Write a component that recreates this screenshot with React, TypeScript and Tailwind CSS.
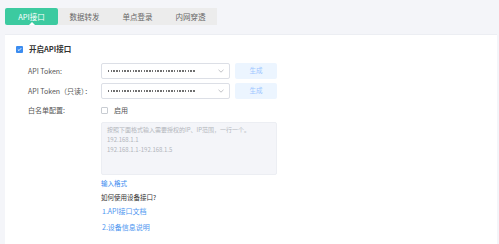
const font = { fontFamily: '"Noto Sans CJK SC", "Noto Sans", sans-serif' };

function Select() {
  return (
    <div className="flex items-center justify-between w-[129px] h-[16px] border border-[#dcdfe6] rounded-[2px] bg-white pl-[6px] pr-[5px]">
      <div className="w-[88px] h-[1.5px] bg-[repeating-linear-gradient(90deg,#707070_0px,#707070_1.5px,transparent_1.5px,transparent_2.75px)]" />
      <svg width="6" height="4" viewBox="0 0 6 4" fill="none">
        <path d="M0.5 0.8 L3 3.2 L5.5 0.8" stroke="#b0b3b8" strokeWidth="0.8" />
      </svg>
    </div>
  );
}

function GenButton() {
  return (
    <div className="ml-[5px] w-[42px] h-[16px] bg-[#ecf5ff] rounded-[2px] flex items-center justify-center text-[6.5px] text-[#9dc6ff]">生成</div>
  );
}

export default function App() {
  const tabs = ["API接口", "数据转发", "单点登录", "内网穿透"];
  return (
    <div style={font} className="w-[499px] h-[244px] bg-[#f4f5f9] flex flex-col overflow-hidden">
      <div className="flex pt-[8px] pl-[5px]">
        {tabs.map((t, i) => (
          <div
            key={t}
            className={`relative w-[53px] h-[17px] flex items-center justify-center text-[7.5px] ${
              i === 0 ? "bg-[#3ccaa0] text-white rounded-[2px]" : "bg-[#ececec] text-[#666]"
            }`}
          >
            {t}
            {i === 0 && (
              <span className="absolute bottom-0 left-1/2 -translate-x-1/2 w-0 h-0 border-l-[3px] border-r-[3px] border-b-[3px] border-l-transparent border-r-transparent border-b-white" />
            )}
          </div>
        ))}
      </div>
      <div className="mt-[9px] ml-[5px] mr-[2px] flex-1 bg-white border-t border-[#eceef3] pl-[11px] pt-[9px]">
        <div className="flex items-center gap-[6px] h-[10px]">
          <div className="w-[7px] h-[7px] bg-[#3b8cf0] rounded-[1px] flex items-center justify-center">
            <svg width="5" height="5" viewBox="0 0 5 5" fill="none">
              <path d="M0.8 2.5 L2 3.6 L4.2 1.2" stroke="white" strokeWidth="0.9" />
            </svg>
          </div>
          <span className="text-[7.5px] font-bold text-[#333]">开启API接口</span>
        </div>
        <div className="pl-[12px] pt-[9px] flex flex-col">
          <div className="flex items-center h-[16px]">
            <span className="w-[73px] text-[7px] text-[#555]">API Token:</span>
            <Select />
            <GenButton />
          </div>
          <div className="flex items-center h-[16px] mt-[4px]">
            <span className="w-[73px] text-[7px] text-[#555] whitespace-nowrap">API Token（只读）：</span>
            <Select />
            <GenButton />
          </div>
          <div className="flex items-center h-[12px] mt-[5px]">
            <span className="w-[73px] text-[7px] text-[#555]">白名单配置:</span>
            <div className="w-[7px] h-[7px] border border-[#c8ccd2] rounded-[1px] bg-white" />
            <span className="ml-[6px] text-[7px] text-[#555]">启用</span>
          </div>
          <div className="ml-[73px] mt-[6px] w-[176px] h-[53px] bg-[#f4f5f9] border border-[#eceef3] rounded-[2px] px-[5px] pt-[2px] text-[6px] leading-[10px] text-[#b3b6bc]">
            <div>按照下面格式输入需要授权的IP、IP范围，一行一个。</div>
            <div>192.168.1.1</div>
            <div>192.168.1.1-192.168.1.5</div>
          </div>
          <div className="ml-[73px] mt-[3px] flex flex-col">
            <span className="text-[6.5px] text-[#3b8cf0] leading-[10px]">输入格式</span>
            <span className="text-[6.5px] text-[#333] leading-[10px] mt-[4px]">如何使用设备接口?</span>
            <span className="text-[7px] text-[#4d95f0] leading-[10px] mt-[4px] ml-[1px]">1.API接口文档</span>
            <span className="text-[7px] text-[#4d95f0] leading-[10px] mt-[6px] ml-[1px]">2.设备信息说明</span>
          </div>
        </div>
      </div>
    </div>
  );
}
